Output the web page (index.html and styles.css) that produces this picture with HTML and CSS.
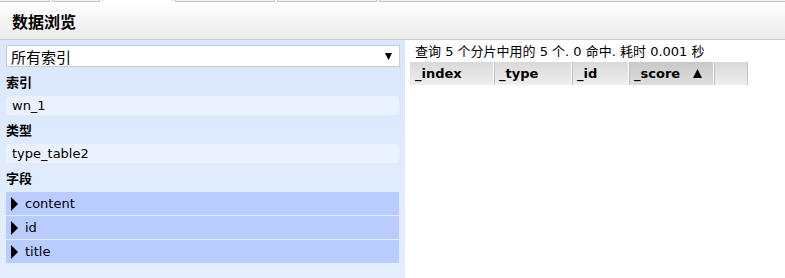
FILE: index.html
```html
<!DOCTYPE html>
<html>
<head>
<meta charset="utf-8">
<link rel="stylesheet" href="styles.css">
</head>
<body>
<div class="tabs">
  <div class="tab t1"></div>
  <div class="tab t2"></div>
  <div class="tab active t3"></div>
  <div class="tab t4"></div>
  <div class="tab t5"></div>
  <div class="tab rest"></div>
</div>
<div class="header"><h1 class="title">数据浏览</h1></div>
<div class="main">
  <div class="side">
    <div class="select"><span>所有索引</span><svg class="sel-arrow" width="7" height="7" viewBox="0 0 7 7"><polygon points="0,0 7,0 3.5,7" fill="#000"/></svg></div>
    <div class="label">索引</div>
    <div class="value">wn_1</div>
    <div class="label">类型</div>
    <div class="value">type_table2</div>
    <div class="label">字段</div>
    <div class="fields">
      <div class="field"><svg class="tri" width="7" height="14" viewBox="0 0 7 14"><polygon points="0,0 7,7 0,14" fill="#000"/></svg><span>content</span></div>
      <div class="field"><svg class="tri" width="7" height="14" viewBox="0 0 7 14"><polygon points="0,0 7,7 0,14" fill="#000"/></svg><span>id</span></div>
      <div class="field"><svg class="tri" width="7" height="14" viewBox="0 0 7 14"><polygon points="0,0 7,7 0,14" fill="#000"/></svg><span>title</span></div>
    </div>
  </div>
  <div class="content">
    <div class="summary">查询 5 个分片中用的 5 个. 0 命中. 耗时 0.001 秒</div>
    <div class="thead">
      <div class="th c-index">_index</div>
      <div class="th c-type">_type</div>
      <div class="th c-id">_id</div>
      <div class="th c-score sorted">_score<svg class="up" width="9" height="9" viewBox="0 0 9 9"><polygon points="0,9 9,9 4.5,0" fill="#000"/></svg></div>
      <div class="th c-blank"></div>
    </div>
  </div>
</div>
</body>
</html>
```
FILE: styles.css
```css
html, body {
  margin: 0;
  padding: 0;
  background: #fff;
}
body {
  font-family: "DejaVu Sans", "Noto Sans CJK SC", sans-serif;
  font-size: 13px;
  color: #000;
  width: 785px;
  height: 278px;
  overflow: hidden;
  display: flex;
  flex-direction: column;
}
.tabs {
  display: flex;
  height: 3px;
  gap: 2px;
}
.tab {
  height: 1px;
  border: 1px solid #c4c4c4;
  border-top: none;
  background: #f2f2f2;
}
.t1 { width: 49px; border-left: none; }
.t2 { width: 46px; }
.t3 { width: 69px; }
.t4 { width: 98px; }
.t5 { width: 98px; }
.rest { flex: 1; border-right: none; }
.tab.active {
  background: #fff;
  border-bottom: none;
}
.header {
  height: 36px;
  background: linear-gradient(#fdfdfd, #ececec);
  border-bottom: 1px solid #c9cdd3;
  display: flex;
  align-items: center;
}
.title {
  margin: 0 0 0 12px;
  font-size: 16px;
  font-weight: bold;
  font-family: "Noto Sans CJK SC", sans-serif;
  line-height: 20px;
}
.main {
  flex: 1;
  display: flex;
}
.side {
  width: 393px;
  padding: 5px 6px 0 6px;
  background: linear-gradient(#dae7fc, #e4eefe);
}
.select {
  height: 20px;
  border: 1px solid #c5cad3;
  background: #fff;
  display: flex;
  align-items: center;
  justify-content: space-between;
  padding: 0 7px 0 4px;
  font-size: 15px;
  font-family: "Noto Sans CJK SC", sans-serif;
  width: 381px;
}
.select span {
  line-height: 20px;
  position: relative;
  top: 1px;
}
.sel-arrow {
  display: block;
}
.label {
  margin: 6px 0 5px 0;
  line-height: 18px;
  font-weight: bold;
  font-family: "Noto Sans CJK SC", sans-serif;
  font-size: 13px;
}
.value {
  height: 19px;
  line-height: 19px;
  background: #e9f2fe;
  border-radius: 4px;
  padding-left: 6px;
}
.fields {
  display: flex;
  flex-direction: column;
  gap: 1px;
}
.field {
  height: 23px;
  background: #b8ccfe;
  display: flex;
  align-items: center;
  padding-left: 5px;
}
.tri {
  display: block;
  margin-right: 7px;
}
.content {
  flex: 1;
  padding: 0 0 0 5px;
}
.summary {
  margin: 3px 0 0 5px;
  line-height: 18px;
}
.thead {
  display: flex;
  width: 338px;
  height: 23px;
  margin-top: 1px;
}
.th {
  height: 23px;
  line-height: 23px;
  font-weight: bold;
  background: linear-gradient(#d9d9d9, #efefef);
  border-right: 1px solid #fafafa;
  border-left: 1px solid #c2c2c2;
  padding-left: 4px;
  box-sizing: border-box;
  display: flex;
  align-items: center;
}
.th:first-child { border-left: none; padding-left: 5px; }
.c-index { width: 84px; }
.c-type { width: 78px; }
.c-id { width: 57px; }
.c-score { width: 85px; }
.c-blank { width: 34px; border-right: 1px solid #c2c2c2; }
.th.sorted {
  background: linear-gradient(#c8c8c8, #dedede);
}
.up {
  display: block;
  margin-left: 13px;
}
```
